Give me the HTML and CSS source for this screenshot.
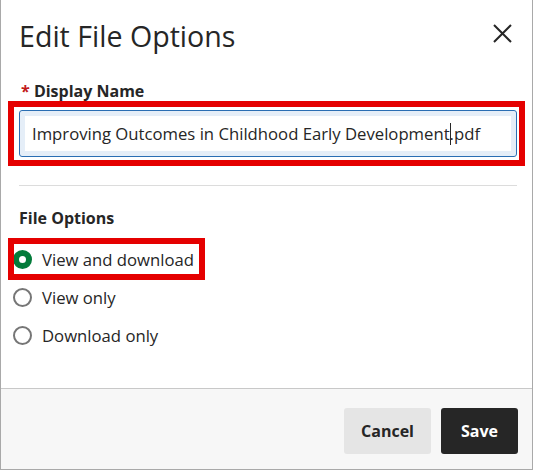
FILE: index.html
```html
<!DOCTYPE html>
<html lang="en">
<head>
    <meta charset="UTF-8">
    <meta name="viewport" content="width=device-width, initial-scale=1.0">
    <title>Edit File Options</title>
    <link rel="stylesheet" href="styles.css">
</head>
<body>
    <div class="dialog">
        <div class="dialog-header">
            <h2 class="dialog-title">Edit File Options</h2>
            <button class="close-btn" aria-label="Close">
                <svg width="19" height="19" viewBox="0 0 19 19"><path d="M1 1 L18 18 M18 1 L1 18" stroke="#262626" stroke-width="2" fill="none"/></svg>
            </button>
        </div>
        <div class="dialog-body">
            <label class="field-label"><span class="required">*</span> Display Name</label>
            <div class="input-wrap">
                <div class="text-input">Improving Outcomes in Childhood Early Development<span class="caret"></span>.pdf</div>
                <span class="callout callout-input"></span>
            </div>
            <hr class="divider">
            <div class="group-label">File Options</div>
            <div class="radio-list">
                <label class="radio-row">
                    <span class="radio checked"></span>View and download
                    <span class="callout callout-radio"></span>
                </label>
                <label class="radio-row"><span class="radio"></span>View only</label>
                <label class="radio-row"><span class="radio"></span>Download only</label>
            </div>
        </div>
        <div class="dialog-footer">
            <button class="btn btn-cancel">Cancel</button>
            <button class="btn btn-save">Save</button>
        </div>
    </div>
</body>
</html>
```

FILE: styles.css
```css
body { margin: 0; background: #fff; font-family: "Open Sans", sans-serif; color: #262626; }
.dialog { width: 533px; height: 470px; box-sizing: border-box; border: 1px solid #a9a9a9; border-top: none; display: flex; flex-direction: column; background: #fff; }
.dialog-header { display: flex; justify-content: space-between; align-items: flex-start; padding: 16px 20px 0 18px; }
.dialog-title { margin: 0; font-size: 28.6px; font-weight: 400; line-height: 40px; }
.close-btn { background: none; border: none; padding: 0; margin-top: 8px; width: 19px; height: 19px; cursor: pointer; }
.close-btn svg { display: block; }
.dialog-body { padding: 0 15px 0 18px; }
.field-label { display: block; margin-top: 23px; padding-left: 2px; font-size: 16px; font-weight: 700; line-height: 24px; }
.required { color: #c21a1a; }
.input-wrap { position: relative; margin-top: 7px; }
.text-input { height: 47px; box-sizing: border-box; border: 1px solid #2a6eb3; border-radius: 3px; box-shadow: inset 0 0 0 5px #e5eef8; padding: 0 12px; font-size: 16.7px; line-height: 45px; white-space: nowrap; }
.caret { display: inline-block; width: 1px; height: 22px; background: #262626; vertical-align: -5px; margin-right: -1px; }
.callout { position: absolute; border: 6px solid #e50000; pointer-events: none; }
.callout-input { left: -11px; right: -8px; top: -9px; bottom: -9px; }
.divider { border: none; border-top: 1px solid #dcdcdc; margin: 28px 0 0; }
.group-label { margin-top: 20px; font-size: 16px; font-weight: 700; line-height: 24px; }
.radio-list { display: flex; flex-direction: column; align-items: flex-start; margin: 10px 0 0 -6px; }
.radio-row { position: relative; display: inline-flex; align-items: center; height: 38px; font-size: 16.7px; }
.radio { width: 19px; height: 19px; box-sizing: border-box; border: 2px solid #767676; border-radius: 50%; margin-right: 10px; }
.radio.checked { border: 6px solid #037b3a; }
.callout-radio { left: -5px; right: -11px; top: -2px; bottom: -2px; }
.dialog-footer { margin-top: auto; border-top: 1px solid #c8c8c8; background: #f7f7f7; display: flex; justify-content: flex-end; gap: 10px; padding: 19px 14px 15px; }
.btn { height: 46px; border: none; border-radius: 3px; padding: 0 17px; font-family: "Open Sans", sans-serif; font-size: 16px; font-weight: 700; cursor: pointer; }
.btn-cancel { background: #e5e5e5; color: #262626; }
.btn-save { background: #262626; color: #fff; padding: 0 20px; }
```
